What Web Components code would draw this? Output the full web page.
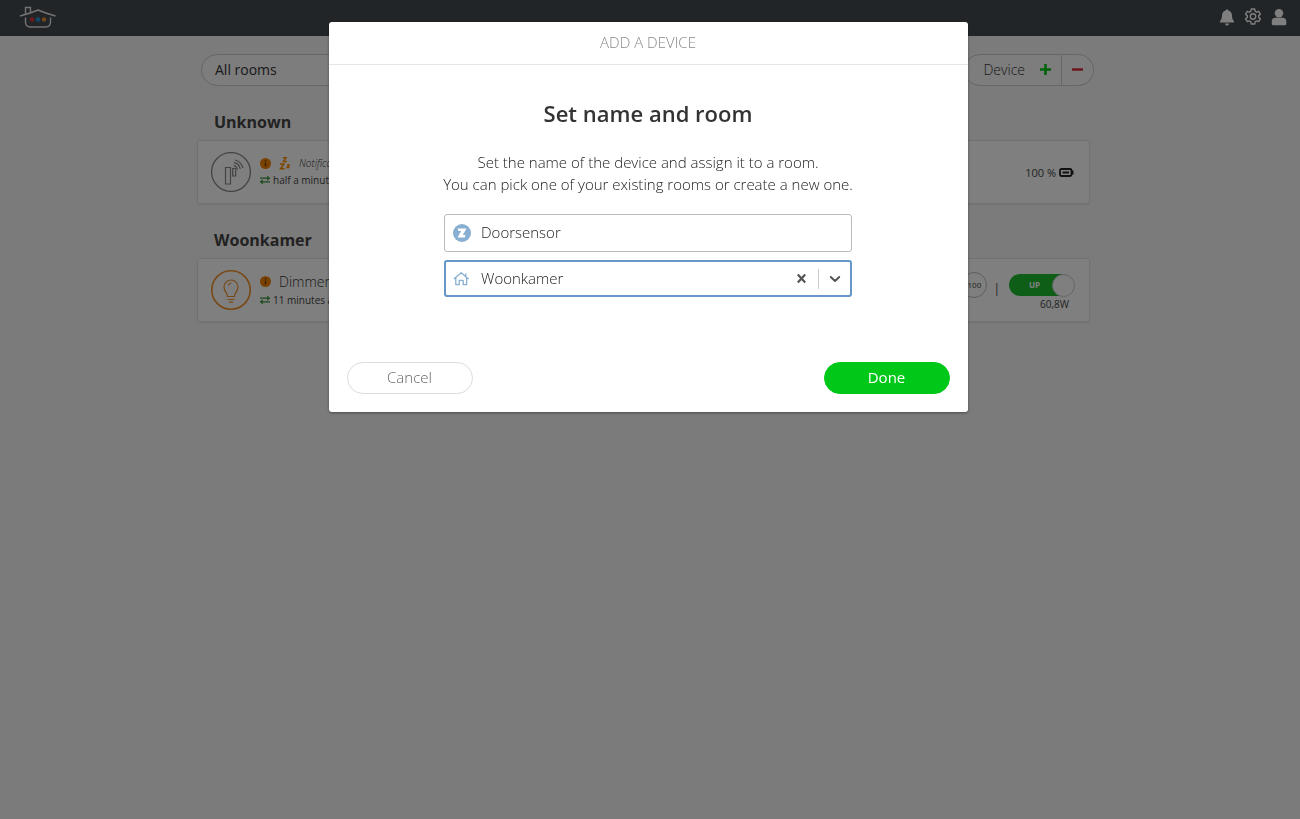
<!DOCTYPE html>
<html lang="en">
<head>
<meta charset="utf-8">
<meta name="viewport" content="width=device-width, initial-scale=1">
<title>Add a device</title>
<style>
body{
    margin: 0;
    min-height: 100vh;
    background: #f7f7f7;
    color: #444;
    font-family: "Open Sans", "Noto Sans", sans-serif;
    font-size: 15px;
}
main{
    box-sizing: border-box;
    width: 100%;
    max-width: 910px;
    margin: 0 auto;
    padding: 18px 11px 0 2px;
}
</style>
</head>
<body>
<app-header></app-header>
<main>
  <room-toolbar></room-toolbar>
  <room-section data-name="Unknown">
    <device-card data-name="Notification" data-seen="half a minute ago" data-kind="sensor">
      <battery-level data-value="100"></battery-level>
    </device-card>
  </room-section>
  <room-section data-name="Woonkamer">
    <device-card data-name="Dimmer" data-seen="11 minutes ago" data-kind="light">
      <dimmer-control data-level="100" data-power="60,8W"></dimmer-control>
    </device-card>
  </room-section>
</main>
<modal-dialog data-title="Add a device">
  <device-form></device-form>
  <pill-button slot="actions" data-label="Cancel"></pill-button>
  <pill-button slot="actions" data-label="Done" data-primary></pill-button>
</modal-dialog>

<script>
// Clones a template into an open shadow root
class BaseElement extends HTMLElement{
    constructor(){
        super();
        this.attachShadow({mode: "open"});
    }

    connectedCallback(){
        const template = document.createElement("template");
        template.innerHTML = this.markup();
        this.shadowRoot.replaceChildren(template.content.cloneNode(true));
    }
}

class AppHeader extends BaseElement{
    markup(){
        return `
<style>
:host{
    display: flex;
    align-items: center;
    justify-content: space-between;
    box-sizing: border-box;
    height: 36px;
    padding: 0 12px 2px 18px;
    background: #444b50;
}
a, button{
    display: block;
    padding: 0;
    border: 0;
    background: none;
    color: #fff;
}
svg{
    display: block;
}
nav{
    display: flex;
    gap: 8px;
}
</style>
<a href="#" aria-label="Home">
  <svg width="40" height="24" viewBox="0 0 40 24" fill="none" stroke="#e4e4e4" stroke-width="1.4">
    <path d="M2 11 Q12 8.500 20 5 Q28 8.500 37.500 11"/>
    <path d="M7.500 9 V2.500 H12.500 V7.500"/>
    <path d="M7.500 12.500 V17 Q7.500 22 12.500 22 H27.500 Q32.500 22 32.500 17 V12.500"/>
    <g stroke="none"><circle cx="14" cy="14.500" r="2.200" fill="#e8322e"/><circle cx="20" cy="14.500" r="2.200" fill="#2393d8"/><circle cx="26" cy="14.500" r="2.200" fill="#e88a2c"/></g>
  </svg>
</a>
<nav>
  <button aria-label="Notifications">
    <svg width="18" height="18" viewBox="0 0 18 18" fill="currentColor"><path d="M8 2.200a1 1 0 0 1 2 0c2.700.6 4 2.700 4 5.300 0 3.200.8 4.500 2 5.600.4.900 0 1.400-.7 1.400H2.700c-.7 0-1.100-.5-.7-1.400 1.200-1.100 2-2.400 2-5.600 0-2.600 1.300-4.700 4-5.300z"/><path d="M7 15.500h4a2 2 0 0 1-4 0z"/></svg>
  </button>
  <button aria-label="Settings">
    <svg width="18" height="18" viewBox="0 0 18 18" fill="none" stroke="currentColor" stroke-width="1.400" stroke-linejoin="round"><path d="M7.300 1h3.400l.4 2.200 1.500.9 2.100-.8 1.700 2.900-1.700 1.400v1.800l1.700 1.400-1.700 2.900-2.100-.8-1.500.9-.4 2.200H7.300l-.4-2.200-1.500-.9-2.100.8-1.700-2.900 1.700-1.400V7.600L1.600 6.200l1.700-2.900 2.100.8 1.500-.9z"/><circle cx="9" cy="8.500" r="2.700"/></svg>
  </button>
  <button aria-label="Account">
    <svg width="18" height="18" viewBox="0 0 18 18" fill="currentColor"><circle cx="9" cy="5.200" r="4.200"/><path d="M5.500 9.700h7c2.500 0 3.800 1.600 3.800 3.800V16c0 .8-.5 1.200-1.200 1.200H3c-.8 0-1.200-.5-1.200-1.200v-2.500c0-2.200 1.200-3.800 3.700-3.800z"/></svg>
  </button>
</nav>`;
    }
}

class RoomToolbar extends BaseElement{
    markup(){
        return `
<style>
:host{
    display: flex;
    justify-content: space-between;
    padding-left: 4px;
}
select, button{
    box-sizing: border-box;
    height: 32px;
    margin: 0;
    border: 1px solid #ccc;
    background: #fafafa;
    color: #333;
    font: inherit;
}
select{
    appearance: none;
    width: 220px;
    padding: 0 13px 1px;
    border-radius: 16px;
    font-size: 14px;
}
.group{
    display: flex;
}
button{
    display: flex;
    align-items: center;
    gap: 15px;
    font-size: 14px;
    font-weight: 300;
}
.add{
    padding: 0 10px 1px 18px;
    border-radius: 16px 0 0 16px;
}
.remove{
    padding: 0 10px 1px;
    border-left: 0;
    border-radius: 0 16px 16px 0;
}
</style>
<select aria-label="Room"><option>All rooms</option></select>
<div class="group">
  <button class="add">Device
    <svg width="11" height="11" viewBox="0 0 11 11" stroke="#00c819" stroke-width="2.600"><path d="M5.500 0v11M0 5.500h11"/></svg>
  </button>
  <button class="remove" aria-label="Remove device">
    <svg width="11" height="11" viewBox="0 0 11 11" stroke="#d8232e" stroke-width="2.400"><path d="M0 5.500h11"/></svg>
  </button>
</div>`;
    }
}

class RoomSection extends BaseElement{
    markup(){
        return `
<style>
:host{
    display: block;
    padding-right: 4px;
}
h2{
    margin: 0;
    padding: 24px 17px 6px;
    font-size: 16px;
    line-height: 24px;
    font-weight: 700;
}
</style>
<h2>${this.dataset.name}</h2>
<slot></slot>`;
    }
}

const deviceIcons = {
    sensor: `<svg width="40" height="40" viewBox="0 0 40 40" fill="none" stroke="#888" stroke-width="1.2"><circle cx="20" cy="20" r="19.400" stroke-width="1.3"/><path d="M14.500 15.500h5v16.500h-5zM21.700 16.500h3v7.500h-3z"/><path d="M22.500 13.500a5 5 0 0 1 4 4M23 10.700a8 8 0 0 1 6.300 6.300M24 8a11 11 0 0 1 8 8"/></svg>`,
    light: `<svg width="40" height="40" viewBox="0 0 40 40" fill="none" stroke="#f0912a" stroke-width="1.200" stroke-linecap="round"><circle cx="20" cy="20" r="19.200" stroke-width="1.600"/><path d="M16.500 26.500c0-4-3.500-5-3.500-9.500a7 7 0 0 1 14 0c0 4.500-3.500 5.500-3.500 9.500zM17 29.500h6M18.500 32.200h3M17.500 15a3 3 0 0 1 2.500-2"/></svg>`
};

const sleepIcon = `<svg width="12" height="13" viewBox="0 0 12 13" fill="none" stroke="#ff8c00" stroke-width="1.500"><path d="M1 7h4L1.500 11.800h4M4 0.800h3L4.500 4.500h3.500M8 8h2L8.200 10.500h2.500"/></svg>`;

class DeviceCard extends BaseElement{
    markup(){
        const sensor = this.dataset.kind === "sensor";
        return `
<style>
:host{
    display: flex;
    align-items: center;
    gap: 9px;
    box-sizing: border-box;
    height: 64px;
    padding: 0 13px;
    border: 1px solid #e2e2e2;
    border-radius: 3px;
    background: #fff;
    box-shadow: 0 1px 2px rgba(0, 0, 0, .08);
}
svg{
    flex: none;
}
.info{
    flex: 1;
}
.name, .seen{
    display: flex;
    align-items: center;
}
.name{
    gap: 8px;
    height: 20px;
    color: #333;
    font-size: 14px;
    font-weight: 300;
}
.sensor .name{
    height: 16px;
    font-size: 10px;
    font-style: italic;
}
.seen{
    gap: 3px;
    height: 18px;
    font-size: 10px;
}
</style>
${deviceIcons[this.dataset.kind]}
<div class="info ${this.dataset.kind}">
  <div class="name">
    <svg width="11" height="11" viewBox="0 0 11 11"><circle cx="5.500" cy="5.500" r="5.500" fill="#f58200"/><path d="M5.500 2v1.500M5.500 4.500v4" stroke="#7a4600" stroke-width="1.500"/></svg>
    ${sensor ? sleepIcon : ""}
    <span>${this.dataset.name}</span>
  </div>
  <div class="seen">
    <svg width="10" height="8" viewBox="0 0 10 8" fill="none" stroke="#3c9440" stroke-width="1.200"><path d="M0 2.200h9M7.300.3 9.300 2.200 7.300 4M10 5.800H1M2.700 4 .7 5.800l2 1.900"/></svg>
    <span>${this.dataset.seen}</span>
  </div>
</div>
<slot></slot>`;
    }
}

class BatteryLevel extends BaseElement{
    markup(){
        return `
<style>
:host{
    display: flex;
    align-items: center;
    gap: 3px;
    padding-right: 2px;
    font-size: 11px;
}
</style>
<span>${this.dataset.value} %</span>
<svg width="15" height="9" viewBox="0 0 15 9"><rect x="1" y="1" width="11.500" height="7" rx="1.500" fill="none" stroke="#222" stroke-width="1.800"/><path d="M3.500 3.500h6.500v2H3.500zM13 2.500h1.500v4H13z" fill="#222"/></svg>`;
    }
}

class DimmerControl extends BaseElement{
    markup(){
        return `
<style>
:host{
    display: flex;
    align-items: flex-start;
    gap: 6px;
    padding: 4px 1px 0 0;
}
.level{
    box-sizing: border-box;
    width: 26px;
    height: 26px;
    margin-top: -2px;
    padding: 0;
    border: 1px solid #bbb;
    border-radius: 50%;
    background: #fff;
    color: inherit;
    font: inherit;
    font-size: 8px;
}
.bar{
    margin: 6px 3px 0 0;
    font-size: 12px;
    line-height: 18px;
}
.switch{
    display: grid;
    width: 66px;
    text-align: right;
}
input{
    appearance: none;
    grid-area: 1 / 1;
    box-sizing: border-box;
    width: 64px;
    height: 22px;
    margin: 0;
    border-radius: 11px;
    background: #1fbd2f;
}
.up{
    grid-area: 1 / 1;
    justify-self: start;
    padding-left: 20px;
    color: #fff;
    font-size: 8px;
    font-weight: 700;
    line-height: 22px;
    pointer-events: none;
}
.knob{
    grid-area: 1 / 1;
    justify-self: end;
    box-sizing: border-box;
    width: 23px;
    height: 23px;
    border: 1px solid #ccc;
    border-radius: 50%;
    background: #fff;
    pointer-events: none;
}
.power{
    padding-right: 6px;
    font-size: 10px;
    line-height: 14px;
}
</style>
<button class="level" aria-label="Level">${this.dataset.level}</button>
<span class="bar">|</span>
<div class="switch">
  <input id="power" type="checkbox" role="switch" checked>
  <label class="up" for="power">UP</label>
  <span class="knob"></span>
  <span class="power">${this.dataset.power}</span>
</div>`;
    }
}

class ModalDialog extends BaseElement{
    markup(){
        return `
<style>
:host{
    position: fixed;
    inset: 0;
    display: flex;
    justify-content: center;
    align-items: flex-start;
    padding: 22px 4px 0 0;
    background: rgba(0, 0, 0, .5);
}
section{
    width: 100%;
    max-width: 639px;
    border-radius: 3px;
    background: #fff;
    box-shadow: 0 1px 3px rgba(0, 0, 0, .4);
}
header{
    padding-bottom: 2px;
    border-bottom: 1px solid #e5e5e5;
    color: #888;
    font-size: 15px;
    font-weight: 300;
    line-height: 40px;
    text-align: center;
    text-transform: uppercase;
}
footer{
    display: flex;
    justify-content: space-between;
    padding: 0 18px 18px;
}
</style>
<section role="dialog" aria-modal="true" aria-label="${this.dataset.title}">
  <header>${this.dataset.title}</header>
  <slot></slot>
  <footer><slot name="actions"></slot></footer>
</section>`;
    }
}

class DeviceForm extends BaseElement{
    markup(){
        return `
<style>
:host{
    display: block;
    padding: 31px 0 65px;
    text-align: center;
}
h1{
    margin: 0;
    color: #333;
    font-size: 22px;
    line-height: 34px;
    font-weight: 600;
}
p{
    margin: 21px 0 19px;
    color: #222;
    font-size: 15px;
    font-weight: 300;
    line-height: 22px;
}
form{
    display: grid;
    gap: 8px;
    max-width: 408px;
    margin: 0 auto;
}
.field{
    display: flex;
    align-items: center;
    box-sizing: border-box;
    height: 38px;
    padding: 0 8px;
    border: 1px solid #bbb;
    border-radius: 3px;
}
.field.focus{
    height: 37px;
    padding: 0 9px 0 7px;
    border: 2px solid #6496c8;
}
input, select{
    appearance: none;
    flex: 1;
    box-sizing: border-box;
    min-width: 0;
    height: 30px;
    margin: 0;
    padding: 0 0 2px 10px;
    border: 0;
    outline: 0;
    background: none;
    color: #222;
    font: inherit;
    font-weight: 300;
}
button{
    padding: 0;
    border: 0;
    background: none;
}
svg{
    display: block;
    flex: none;
}
.divider{
    width: 1px;
    height: 20px;
    margin: 0 10px 0 11px;
    background: #ccc;
}
</style>
<h1>Set name and room</h1>
<p>Set the name of the device and assign it to a room.<br>You can pick one of your existing rooms or create a new one.</p>
<form>
  <div class="field">
    <svg width="18" height="18" viewBox="0 0 18 18"><circle cx="9" cy="9" r="9" fill="#88afd2"/><path d="M4.500 4.500H13.500L9.800 11H12.500L11.800 13.500H4.500L8.200 7H5.500z" fill="#fff"/></svg>
    <input type="text" value="Doorsensor" aria-label="Device name">
  </div>
  <div class="field focus">
    <svg width="18" height="18" viewBox="0 0 18 18" fill="none" stroke="#88afd2" stroke-width="1.300" stroke-linejoin="round"><path d="M.8 9 8.200 2.700l7.400 6.300M2.800 7.700v7h3.400v-4.400h4v4.400h3.400v-7M12.800 6.200V3.500"/></svg>
    <select aria-label="Room"><option>Woonkamer</option></select>
    <button type="button" aria-label="Clear room"><svg width="11" height="11" viewBox="0 0 11 11" stroke="#555" stroke-width="2.200"><path d="M1.800 1.500l7.400 8M9.200 1.500 1.800 9.500"/></svg></button>
    <span class="divider"></span>
    <button type="button" aria-label="Show rooms"><svg width="12" height="8" viewBox="0 0 12 8" fill="none" stroke="#555" stroke-width="2" stroke-linecap="round" stroke-linejoin="round"><path d="M1.800 2 6 6l4.200-4"/></svg></button>
  </div>
</form>`;
    }
}

class PillButton extends BaseElement{
    markup(){
        return `
<style>
:host{
    display: block;
}
button{
    box-sizing: border-box;
    width: 126px;
    height: 32px;
    padding: 0 0 2px;
    border: 1px solid #ddd;
    border-radius: 16px;
    background: #fff;
    color: #666;
    font: inherit;
    font-weight: 300;
}
:host([data-primary]) button{
    border-color: #00c819;
    background: #00c819;
    color: #fff;
    font-weight: 400;
}
</style>
<button type="button">${this.dataset.label}</button>`;
    }
}

customElements.define("app-header", AppHeader);
customElements.define("room-toolbar", RoomToolbar);
customElements.define("room-section", RoomSection);
customElements.define("device-card", DeviceCard);
customElements.define("battery-level", BatteryLevel);
customElements.define("dimmer-control", DimmerControl);
customElements.define("modal-dialog", ModalDialog);
customElements.define("device-form", DeviceForm);
customElements.define("pill-button", PillButton);
</script>
</body>
</html>
